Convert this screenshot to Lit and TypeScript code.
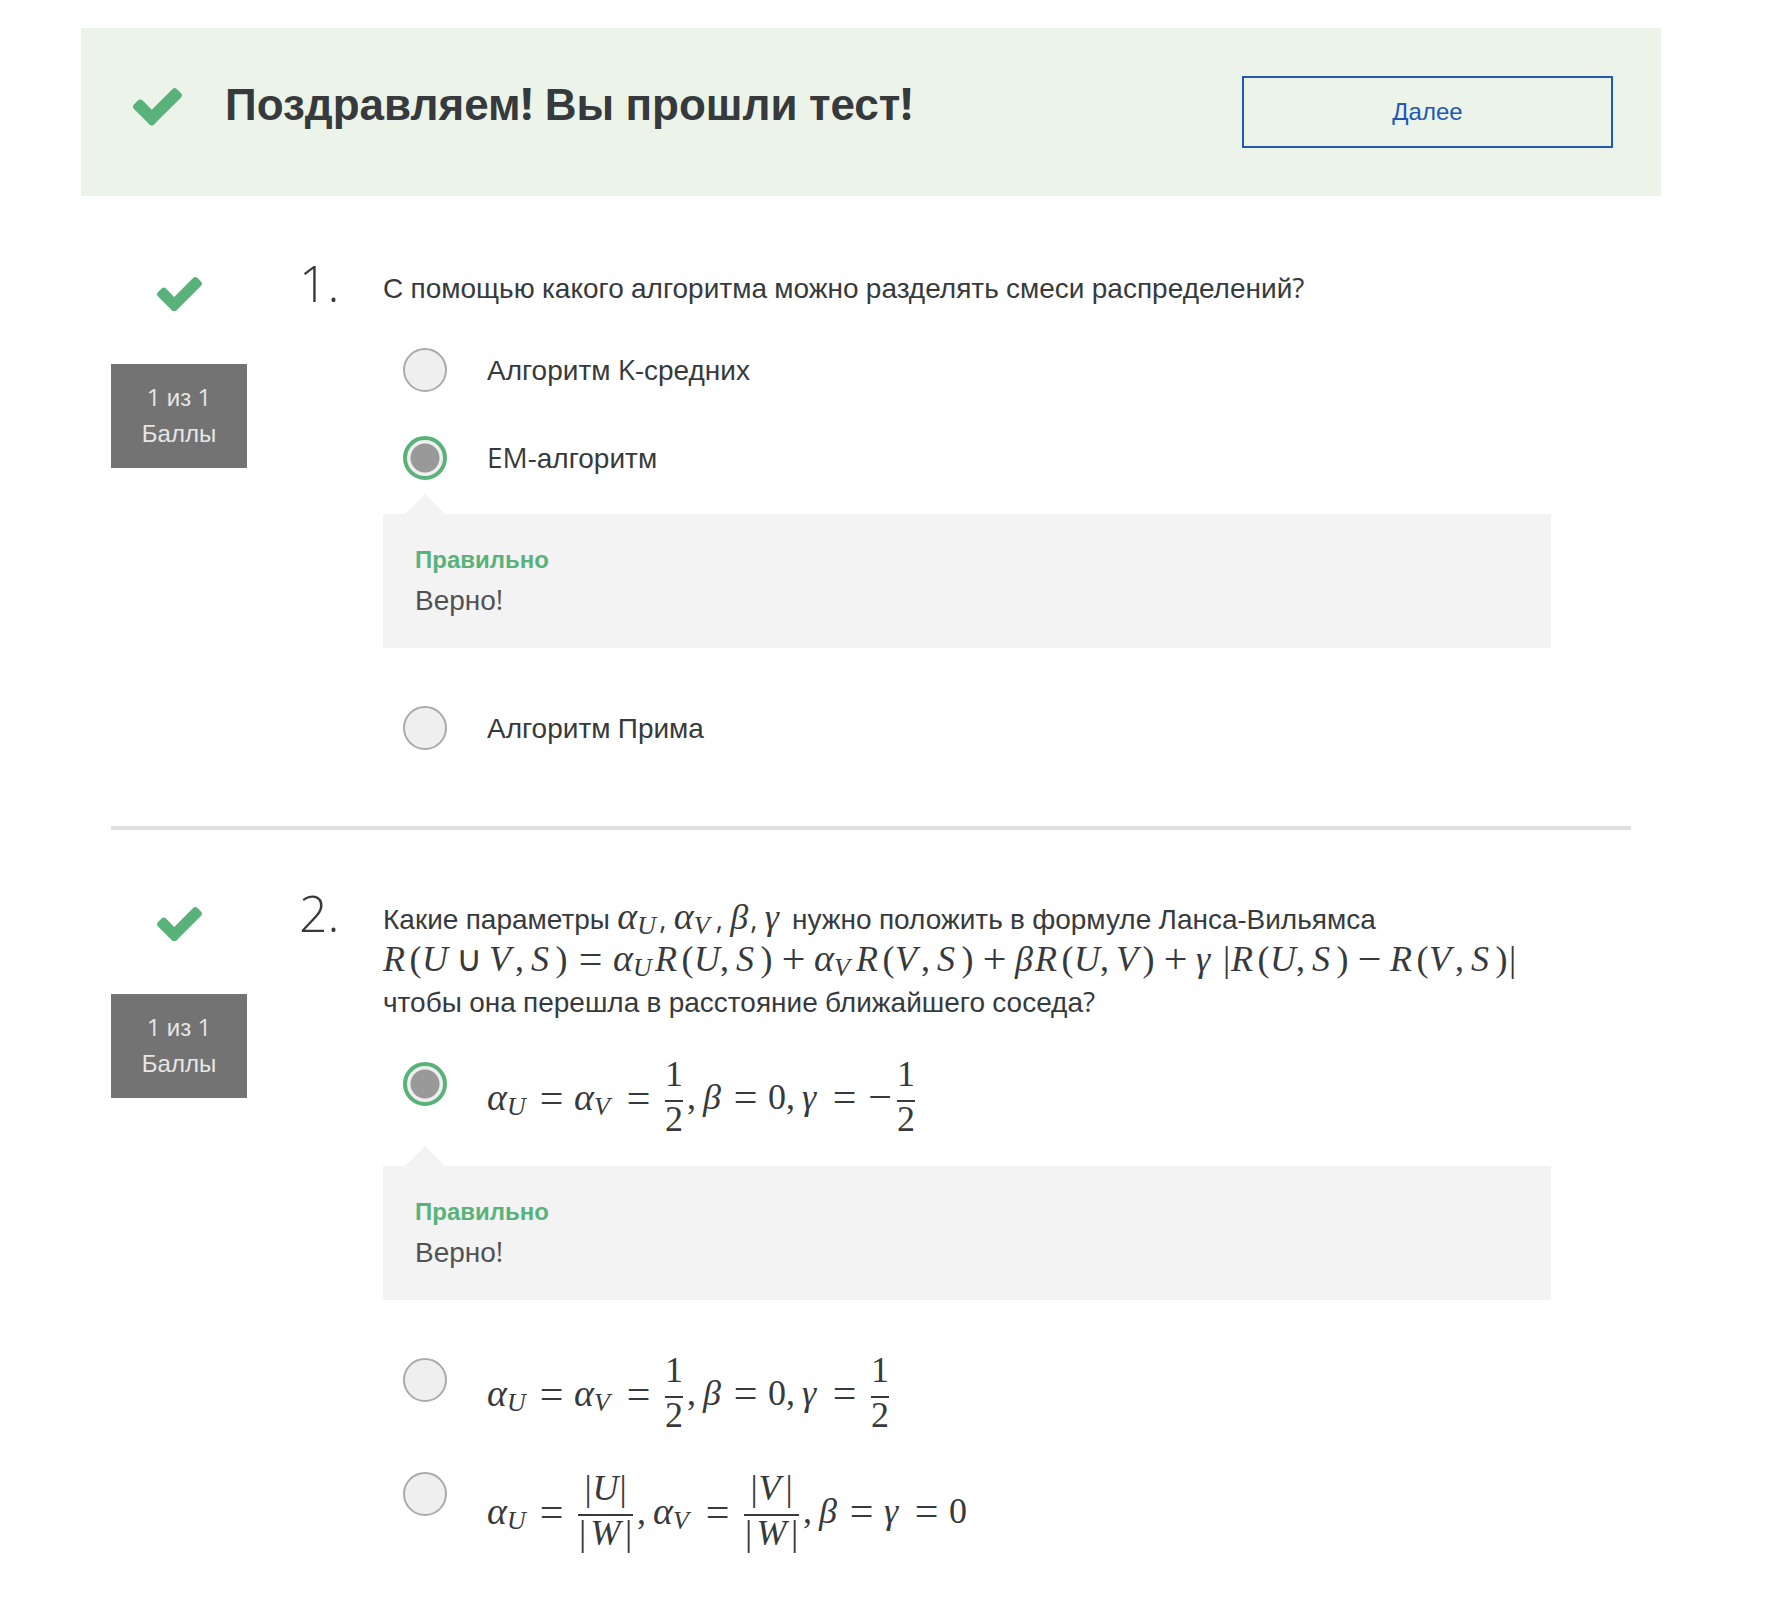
import { LitElement, html, css, svg, TemplateResult } from "lit";
import { customElement, property } from "lit/decorators.js";

/** Wraps runs of non-Cyrillic characters so they take the Latin face. */
const mixed = (text: string) =>
  text
    .split(/([^\u0400-\u04FF]+)/)
    .filter((part) => part !== "")
    .map((part) =>
      /^[\u0400-\u04FF]/.test(part) ? part : html`<span class="latin">${part}</span>`
    );

type Frac = { num: string; den: string };
type Formula = (string | Frac)[];

const glyphClass: Record<string, string> = {
  "α": "it alpha",
  "β": "it greek",
  "γ": "it greek",
  R: "it wide",
  U: "it wide",
  V: "it wide",
  W: "it extra",
  S: "it mid",
  "(": "paren",
  ")": "paren",
  "|": "bar",
  ",": "comma",
  "=": "op rel",
  "+": "op bin",
  "−": "op bin",
  "-": "op unary",
  "∪": "bin",
  " ": "thin",
  "0": "digit",
  "1": "digit",
  "2": "digit",
};

/** Sets a run of symbols; "_" marks the next symbol as a subscript. */
const run = (source: string) => {
  const out: TemplateResult[] = [];
  const chars = [...source];
  for (let i = 0; i < chars.length; i++) {
    if (chars[i] === "_") {
      i++;
      out.push(html`<span class="g sub">${chars[i]}</span>`);
    } else {
      const shown = chars[i] === "-" ? "−" : chars[i];
      out.push(html`<span class="g ${glyphClass[chars[i]] ?? ""}">${shown}</span>`);
    }
  }
  return html`<span class="run">${out}</span>`;
};

const formula = (parts: Formula) => {
  const tall = parts.some((p) => typeof p !== "string" && p.num.includes("|"));
  return html`<span class="math ${tall ? "tall" : ""}">
    ${parts.map((p) =>
      typeof p === "string"
        ? run(p)
        : html`<span class="frac"
            ><span class="num">${run(p.num)}</span><span class="den">${run(p.den)}</span></span
          >`
    )}
  </span>`;
};

const symbols = css`
  .latin {
    font-family: "Open Sans", sans-serif;
    line-height: 1;
  }
  .run {
    font-family: "Liberation Serif", serif;
    font-size: 36px;
    line-height: 36px;
    white-space: nowrap;
  }
  .g {
    display: inline-block;
    line-height: 36px;
    text-align: center;
  }
  .it {
    font-style: italic;
    text-align: left;
  }
  .alpha {
    width: 22px;
    font-size: 38px;
  }
  .greek {
    width: 20px;
  }
  .wide {
    width: 26px;
  }
  .extra {
    width: 37px;
    text-align: center;
  }
  .mid {
    width: 24px;
  }
  .paren {
    width: 13px;
  }
  .bar {
    width: 9px;
  }
  .comma {
    width: 16px;
    text-align: left;
  }
  .op {
    font-size: 42px;
    vertical-align: -2px;
  }
  .rel {
    width: 45px;
  }
  .bin {
    width: 41px;
  }
  .unary {
    width: 26px;
  }
  .thin {
    width: 6px;
  }
  .digit {
    width: 18px;
  }
  .sub {
    width: 22px;
    margin-left: -2px;
    font-size: 26px;
    font-style: italic;
    line-height: 26px;
    text-align: left;
    vertical-align: -5px;
  }
`;

@customElement("check-mark")
export class CheckMark extends LitElement {
  static styles = css`
    :host {
      display: block;
      color: #5ab27b;
    }
    svg {
      display: block;
      width: 100%;
      fill: currentColor;
    }
  `;
  render() {
    return html`<svg viewBox="121 334 1550 1188" aria-hidden="true">
      ${svg`<path d="M1671 566q0 40-28 68l-724 724-136 136q-28 28-68 28t-68-28l-136-136-362-362q-28-28-28-68t28-68l136-136q28-28 68-28t68 28l294 295 656-657q28-28 68-28t68 28l136 136q28 28 28 68z"/>`}
    </svg>`;
  }
}

interface Option {
  label: unknown;
  feedback?: string;
}

@customElement("quiz-question")
export class QuizQuestion extends LitElement {
  @property({ type: Number }) number = 1;
  @property({ attribute: false }) prompt: unknown;
  @property({ attribute: false }) options: Option[] = [];

  static styles = [
    symbols,
    css`
      :host {
        display: grid;
        grid-template-columns: 188px 84px minmax(0, 1fr);
        padding: 53px 80px 76px 0;
      }
      .score {
        width: 136px;
        padding-top: 24px;
      }
      .mark {
        width: 45px;
        height: 35px;
        margin: 0 auto 52px;
      }
      .points {
        padding: 16px 0;
        background: #737373;
        color: #e6e6e6;
        font-size: 24px;
        line-height: 36px;
        text-align: center;
      }
      .number {
        font-family: "Open Sans", sans-serif;
        font-size: 50px;
        font-weight: 300;
        line-height: 60px;
      }
      .body {
        padding-top: 15px;
      }
      .prompt {
        margin: 0 0 38px;
      }
      .line {
        display: block;
        height: 42px;
        white-space: nowrap;
      }
      .display {
        line-height: 44px;
      }
      .options {
        display: flex;
        flex-direction: column;
        gap: 44px;
      }
      .option {
        display: flex;
        align-items: flex-start;
        gap: 40px;
        padding-left: 20px;
      }
      .radio {
        appearance: none;
        flex: none;
        width: 44px;
        height: 44px;
        margin: 0;
        border: 2px solid #aaa;
        border-radius: 50%;
        background: #efefef;
      }
      .radio:checked {
        border: 4px solid #5ab27b;
        background: radial-gradient(circle, #999 14px, #efefef 15px);
      }
      .label {
        padding-top: 2px;
      }
      .feedback {
        position: relative;
        margin: 34px 0 14px;
        padding: 24px 32px 28px;
        background: #f3f3f3;
        color: #525252;
      }
      .feedback::before {
        content: "";
        position: absolute;
        left: 22px;
        top: -20px;
        border: solid transparent;
        border-width: 0 20px 20px;
        border-bottom-color: #f3f3f3;
      }
      .verdict {
        margin: 0;
        color: #5ab27b;
        font-size: 24px;
        font-weight: 700;
        line-height: 44px;
      }
      .comment {
        margin: 0;
        line-height: 38px;
      }
      .math {
        display: flex;
        align-items: flex-start;
        height: 68px;
      }
      .math.tall {
        padding-top: 4px;
      }
      .math > .run {
        padding-top: 15px;
      }
      .frac {
        display: flex;
        flex-direction: column;
        margin: 0 4px;
        text-align: center;
      }
      .num {
        padding-bottom: 16px;
        border-bottom: 2px solid currentColor;
        line-height: 20px;
      }
      .den {
        padding-top: 5px;
        line-height: 24px;
      }
      .num,
      .den {
        display: flex;
        justify-content: center;
      }
      .num .run,
      .den .run,
      .num .g,
      .den .g {
        line-height: inherit;
      }
    `,
  ];

  render() {
    return html`
      <div class="score">
        <check-mark class="mark"></check-mark>
        <div class="points">${mixed("1 из 1")}<br />Баллы</div>
      </div>
      <div class="number">${this.number}.</div>
      <div class="body">
        <p class="prompt" id="prompt">${this.prompt}</p>
        <div class="options" role="radiogroup" aria-labelledby="prompt">
          ${this.options.map(
            (option, i) => html`<div>
              <div class="option">
                <input
                  class="radio"
                  type="radio"
                  name="answer"
                  id="answer-${i}"
                  ?checked=${option.feedback !== undefined}
                />
                <label class="label" for="answer-${i}">${option.label}</label>
              </div>
              ${option.feedback
                ? html`<div class="feedback">
                    <p class="verdict">Правильно</p>
                    <p class="comment">${mixed(option.feedback)}</p>
                  </div>`
                : ""}
            </div>`
          )}
        </div>
      </div>
    `;
  }
}

@customElement("app-root")
export class AppRoot extends LitElement {
  static styles = [
    symbols,
    css`
      :host {
        display: block;
        box-sizing: border-box;
        padding: 28px 131px 0 81px;
        background: #fff;
        color: #373a3c;
        font-family: "Liberation Sans", Arial, sans-serif;
        font-size: 28px;
        line-height: 42px;
      }
      .banner {
        display: flex;
        align-items: flex-start;
        padding: 48px 48px 48px 52px;
        background: #ecf4e9;
      }
      .mark {
        width: 49px;
        margin: 12px 43px 0 0;
      }
      .title {
        flex: 1;
        margin: 0;
        font-size: 44px;
        font-weight: 700;
        line-height: 58px;
      }
      .next {
        width: 371px;
        height: 72px;
        border: 2px solid #2058b3;
        background: transparent;
        color: #2058b3;
        font: inherit;
        font-size: 24px;
      }
      .quiz {
        padding: 4px 30px 0;
      }
      .divider {
        height: 4px;
        margin: 0;
        border: 0;
        background: #e0e0e0;
      }
    `,
  ];

  private first: Option[] = [
    { label: mixed("Алгоритм K-средних") },
    { label: mixed("EM-алгоритм"), feedback: "Верно!" },
    { label: mixed("Алгоритм Прима") },
  ];

  private second: Option[] = [
    {
      label: formula([
        "α_U=α_V=",
        { num: "1", den: "2" },
        ",β=0,γ=-",
        { num: "1", den: "2" },
      ]),
      feedback: "Верно!",
    },
    {
      label: formula(["α_U=α_V=", { num: "1", den: "2" }, ",β=0,γ=", { num: "1", den: "2" }]),
    },
    {
      label: formula([
        "α_U=",
        { num: "|U|", den: "|W|" },
        ",α_V=",
        { num: "|V|", den: "|W|" },
        ",β=γ=0",
      ]),
    },
  ];

  render() {
    return html`
      <header class="banner">
        <check-mark class="mark"></check-mark>
        <h1 class="title">${mixed("Поздравляем! Вы прошли тест!")}</h1>
        <button class="next" type="button">Далее</button>
      </header>
      <main class="quiz">
        <quiz-question
          .number=${1}
          .prompt=${mixed("С помощью какого алгоритма можно разделять смеси распределений?")}
          .options=${this.first}
        ></quiz-question>
        <hr class="divider" />
        <quiz-question
          .number=${2}
          .prompt=${html`<span class="line"
              >${mixed("Какие параметры ")}${run("α_U")}${mixed(", ")}${run("α_V")}${mixed(
                ", "
              )}${run("β")}${mixed(", ")}${run("γ")}${mixed(
                " нужно положить в формуле Ланса-Вильямса"
              )}</span
            ><span class="line display"
              >${run("R(U∪V,S)=α_UR(U,S)+α_VR(V,S)+βR(U,V)+γ |R(U,S)−R(V,S)|")}</span
            ><span class="line">${mixed("чтобы она перешла в расстояние ближайшего соседа?")}</span>`}
          .options=${this.second}
        ></quiz-question>
      </main>
    `;
  }
}
